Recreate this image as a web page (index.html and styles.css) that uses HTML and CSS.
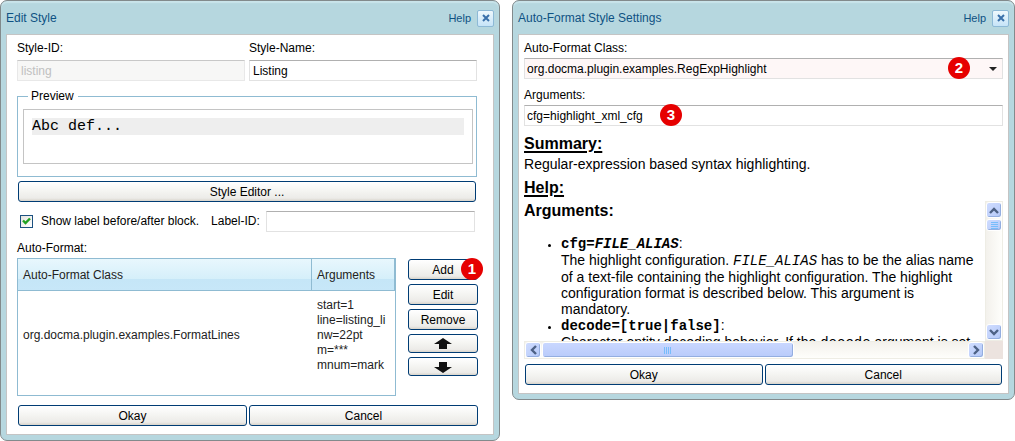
FILE: index.html
```html
<!DOCTYPE html>
<html lang="en">
<head>
<meta charset="utf-8">
<title>Edit Style</title>
<link rel="stylesheet" href="styles.css">
</head>
<body>
<main class="desktop">
  <section class="dialog dialog-edit">
    <header class="titlebar">
      <h1 class="title">Edit Style</h1>
      <a class="help" href="#help">Help</a>
      <button class="close" type="button" aria-label="Close"><svg width="8" height="8" viewBox="0 0 8 8"><path d="M1 1L7 7M7 1L1 7" stroke="#3a70aa" stroke-width="2" fill="none"/></svg></button>
    </header>
    <form class="content content-edit">
      <div class="columns">
        <div class="field"><label for="sid">Style-ID:</label><input class="text" id="sid" value="listing" disabled></div>
        <div class="field"><label for="sname">Style-Name:</label><input class="text" id="sname" value="Listing"></div>
      </div>
      <fieldset class="preview">
        <legend>Preview</legend>
        <div class="preview-box"><div class="sample">Abc def...</div></div>
      </fieldset>
      <button class="btn style-editor" type="button">Style Editor ...</button>
      <div class="label-row">
        <span class="check"><input type="checkbox" id="show" checked><svg class="tick" width="9" height="9" viewBox="0 0 9 9"><path d="M1 3.5L3.5 6L8 1.5" stroke="#21a121" stroke-width="2.4" fill="none"/></svg></span>
        <label for="show">Show label before/after block.</label>
        <label class="label-id" for="lid">Label-ID:</label>
        <input class="text" id="lid">
      </div>
      <div class="caption">Auto-Format:</div>
      <div class="list-row">
        <div class="list">
          <table>
            <thead><tr><th class="col-class">Auto-Format Class</th><th>Arguments</th></tr></thead>
            <tbody><tr><td>org.docma.plugin.examples.FormatLines</td><td class="args">start=1<br>line=listing_li<br>nw=22pt<br>m=***<br>mnum=mark</td></tr></tbody>
          </table>
        </div>
        <div class="actions">
          <div class="anchor"><button class="btn" type="button">Add</button><span class="badge badge-add">1</span></div>
          <button class="btn" type="button">Edit</button>
          <button class="btn" type="button">Remove</button>
          <button class="btn arrow" type="button" aria-label="Move up"><svg width="18" height="12" viewBox="0 0 18 12"><path d="M9 0L18 6H13V11H5V6H0Z" fill="#111"/></svg></button>
          <button class="btn arrow" type="button" aria-label="Move down"><svg width="18" height="12" viewBox="0 0 18 12"><path d="M9 12L18 6H13V1H5V6H0Z" fill="#111"/></svg></button>
        </div>
      </div>
      <div class="footer"><button class="btn" type="button">Okay</button><button class="btn" type="button">Cancel</button></div>
    </form>
  </section>

  <section class="dialog dialog-settings">
    <header class="titlebar">
      <h1 class="title">Auto-Format Style Settings</h1>
      <a class="help" href="#help">Help</a>
      <button class="close" type="button" aria-label="Close"><svg width="8" height="8" viewBox="0 0 8 8"><path d="M1 1L7 7M7 1L1 7" stroke="#3a70aa" stroke-width="2" fill="none"/></svg></button>
    </header>
    <form class="content content-settings">
      <label for="cls">Auto-Format Class:</label>
      <div class="anchor">
        <select class="text combo" id="cls"><option>org.docma.plugin.examples.RegExpHighlight</option></select>
        <svg class="caret" width="8" height="4" viewBox="0 0 8 4"><path d="M0 0H8L4 4Z" fill="#222"/></svg>
        <span class="badge badge-class">2</span>
      </div>
      <label class="args-label" for="args">Arguments:</label>
      <div class="anchor">
        <input class="text args-input" id="args" value="cfg=highlight_xml_cfg">
        <span class="badge badge-args">3</span>
      </div>
      <h2 class="heading"><u>Summary:</u></h2>
      <p class="summary">Regular-expression based syntax highlighting.</p>
      <h2 class="heading"><u>Help:</u></h2>
      <div class="scroller">
        <div class="view">
          <h2 class="heading">Arguments:</h2>
          <ul class="doc">
            <li><code><b>cfg=<i>FILE_ALIAS</i></b></code>:<br>The highlight configuration. <code><i>FILE_ALIAS</i></code> has to be the alias name<br>of a text-file containing the highlight configuration. The highlight<br>configuration format is described below. This argument is<br>mandatory.</li>
            <li><code><b>decode=[true|false]</b></code>:<br>Character entity decoding behavior. If the <code>decode</code> argument is set</li>
          </ul>
        </div>
        <div class="vbar">
          <span class="sb"><svg width="10" height="7" viewBox="0 0 10 7"><path d="M1 6L5 2L9 6" stroke="#4d6185" stroke-width="2.4" fill="none"/></svg></span>
          <span class="sb vthumb"><svg width="7" height="7" viewBox="0 0 7 7"><path d="M0 .5H7M0 2.5H7M0 4.5H7M0 6.5H7" stroke="#77bdfb"/></svg></span>
          <span class="sb vend"><svg width="10" height="7" viewBox="0 0 10 7"><path d="M1 1L5 5L9 1" stroke="#4d6185" stroke-width="2.4" fill="none"/></svg></span>
        </div>
        <div class="hbar">
          <span class="sb"><svg width="7" height="10" viewBox="0 0 7 10"><path d="M6 1L2 5L6 9" stroke="#4d6185" stroke-width="2.4" fill="none"/></svg></span>
          <span class="sb hthumb"><svg width="8" height="7" viewBox="0 0 8 7"><path d="M.5 0V7M2.5 0V7M4.5 0V7M6.5 0V7" stroke="#77bdfb"/></svg></span>
          <span class="sb hend"><svg width="7" height="10" viewBox="0 0 7 10"><path d="M1 1L5 5L1 9" stroke="#4d6185" stroke-width="2.4" fill="none"/></svg></span>
        </div>
        <div class="corner"></div>
      </div>
      <div class="footer"><button class="btn" type="button">Okay</button><button class="btn" type="button">Cancel</button></div>
    </form>
  </section>
</main>
</body>
</html>
```
FILE: styles.css
```css
* { box-sizing: border-box; }

body {
  margin: 0;
  background: #fff;
  color: #000;
  font: 12px/15px "Liberation Sans", Arial, sans-serif;
}

button, input, select { font: inherit; color: inherit; margin: 0; }
label { display: block; }

.desktop { display: flex; align-items: flex-start; gap: 12px; }

.dialog {
  min-width: 0;
  padding: 0 5px 5px;
  border: 1px solid #828a8c;
  border-radius: 7px;
  background: #b6d7df;
  box-shadow: inset 0 2px 1px #c9e4ea;
}
.dialog-edit { flex: 500 1 0; }
.dialog-settings { flex: 503 1 0; }

.titlebar { display: flex; align-items: center; height: 33px; padding-top: 1px; color: #0f5283; }
.title { flex: 1; margin: 0; font-size: 12px; font-weight: normal; }
.help { margin-right: 6px; font-size: 11px; color: inherit; text-decoration: none; }
.close {
  display: grid;
  place-items: center;
  width: 17px;
  height: 17px;
  padding: 0;
  border: 1px solid #8db9d6;
  border-radius: 2px;
  background: linear-gradient(#eef8fd, #c6e4f8);
}

.content { border: 1px solid #c4c4c4; background: #fff; }
.content-edit { padding: 6px 15px 8px 10px; }
.content-settings { padding: 6px 5px 8px; }

.text {
  display: block;
  width: 100%;
  height: 21px;
  padding: 0 3px;
  border: 1px solid #e2e2e2;
  border-top-color: #b0b0b0;
  border-radius: 0;
  background: #fff;
}
.text:disabled { background: #f7f7f6; color: #c0c0c0; border-color: #e8e8e8; border-top-color: #c8c8c8; }

.btn {
  display: flex;
  align-items: center;
  justify-content: center;
  width: 100%;
  height: 21px;
  padding: 1px 0 0;
  border: 1px solid #003c74;
  border-radius: 3px;
  background: linear-gradient(#fff, #f4f4f1 50%, #ecebe8 85%, #d8d4cb);
}

.columns { display: grid; grid-template-columns: 1fr 1fr; gap: 4px; padding-right: 1px; }
.field { display: flex; flex-direction: column; gap: 4px; }

.preview {
  min-width: 0;
  margin: 8px 1px 0 0;
  padding: 5px 3px 12px 5px;
  border: 1px solid #8fbbd2;
}
.preview legend { margin-left: 5px; padding: 0 4px 0 3px; }
.preview-box { height: 55px; padding: 8px; border: 1px solid #c4c4c4; }
.sample {
  height: 17px;
  background: #eee;
  font: 15px/18px "Liberation Mono", "Courier New", monospace;
}

.style-editor { width: auto; min-width: calc(100% - 3px); margin: 4px 2px 9px 1px; }

.label-row { display: flex; align-items: center; padding: 0 3px; }
.label-row .text { flex: 1; min-width: 0; }
.check { position: relative; display: flex; margin-right: 8px; }
.check input {
  appearance: none;
  width: 13px;
  height: 13px;
  border: 1px solid #1c5180;
  background: linear-gradient(135deg, #e4e4df, #fff);
}
.tick { position: absolute; left: 2px; top: 2px; pointer-events: none; }
.label-id { margin: 0 6px 0 12px; }
.caption { margin: 9px 0 2px; }

.list-row { display: flex; gap: 12px; }
.list { flex: 1; min-width: 0; height: 138px; border: 1px solid #8fbbd2; }
table { width: 100%; table-layout: fixed; border-collapse: separate; border-spacing: 0; color: #222; }
th {
  height: 32px;
  padding: 1px 5px 0;
  border-right: 1px solid #8fbbd2;
  border-bottom: 1px solid #8fbbd2;
  background: linear-gradient(#e8f7fd, #d5effa 65%, #c5e6f7 66%, #c7e7f8);
  font-weight: normal;
  text-align: left;
}
.col-class { width: 294px; }
td { padding: 7px 5px; vertical-align: middle; }
.args { padding-right: 0; white-space: nowrap; }
.actions { display: flex; flex-direction: column; gap: 4px; width: 70px; padding-top: 1px; }
.arrow { height: 19px; padding: 0; }
.footer { display: flex; gap: 2px; padding: 0 0 0 1px; }
.content-edit .footer { margin-top: 9px; }
.content-settings .footer { margin-top: 5px; padding: 0 1px; }

.anchor { position: relative; }
.badge {
  position: absolute;
  width: 22px;
  height: 22px;
  border-radius: 50%;
  background: #e60000;
  color: #fff;
  font-size: 15px;
  font-weight: bold;
  line-height: 22px;
  text-align: center;
}
.badge-add { right: -5px; top: -1px; }
.badge-class { right: 33px; top: -1px; }
.badge-args { left: 136px; top: -1px; }

.content-settings label { margin-bottom: 2px; }
.content-settings .args-label { margin-top: 9px; }
.combo { appearance: none; background: #fef7f7; padding: 1px 2px 0; }
.args-input { padding: 0 2px; }
.caret { position: absolute; right: 6px; top: 9px; pointer-events: none; }

.heading { margin: 0; font-size: 16px; line-height: 20px; }
.content-settings > .heading { margin-top: 8px; }
.content-settings > .summary + .heading { margin-top: 4px; }
.heading u { text-decoration-thickness: 2px; text-underline-offset: 2px; }
.summary { margin: 0; font-size: 14px; line-height: 20px; }

.scroller { display: grid; grid-template-columns: 1fr 18px; grid-template-rows: 140px 18px; margin-top: 3px; }
.view { overflow: hidden; min-width: 0; }
.doc { margin: 14px 0 0; padding-left: 37px; font-size: 14px; line-height: 16px; white-space: nowrap; }
.doc li::marker { font-size: 11px; }
.doc code { font: 14px/16px "Liberation Mono", "Courier New", monospace; }

.vbar, .hbar { display: flex; border: 1px solid #eeede5; }
.vbar { flex-direction: column; background: linear-gradient(90deg, #f3f1ec, #fefefb); }
.hbar { background: linear-gradient(#f3f1ec, #fefefb); }
.sb {
  display: grid;
  place-items: center;
  flex: none;
  width: 16px;
  height: 16px;
  border: 1px solid #fff;
  border-radius: 3px;
  background: linear-gradient(135deg, #cfdcff, #b5c9f8);
  box-shadow: inset -1px -1px #94aee0;
}
.vthumb { height: 12px; margin-top: 1px; }
.hthumb { width: 55%; margin-left: 1px; background: linear-gradient(#c9d7ff, #b9cbfa); }
.vend { margin-top: auto; }
.hend { margin-left: auto; }
.corner { background: #ece3df; }
```
